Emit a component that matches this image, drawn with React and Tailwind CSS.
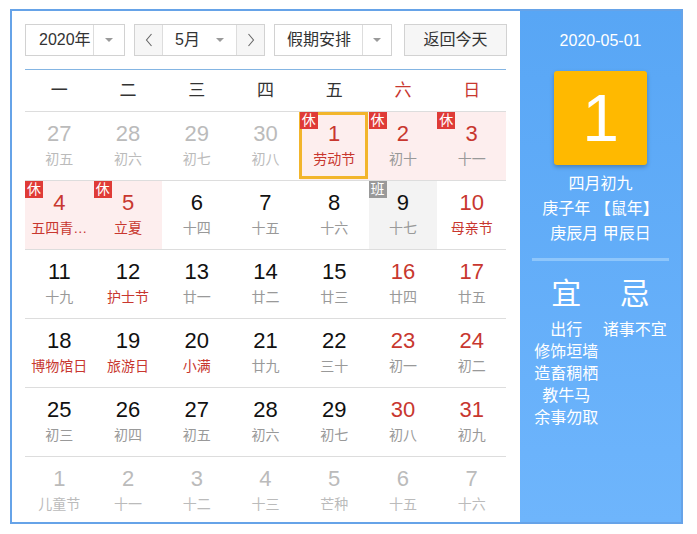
import React from "react";

const RED = "text-[#c8372f]";

const rows = [
  [
    { n: 27, l: "初五", out: true },
    { n: 28, l: "初六", out: true },
    { n: 29, l: "初七", out: true },
    { n: 30, l: "初八", out: true },
    { n: 1, l: "劳动节", hol: true, red: true, fest: true, sel: true },
    { n: 2, l: "初十", hol: true, red: true },
    { n: 3, l: "十一", hol: true, red: true },
  ],
  [
    { n: 4, l: "五四青…", hol: true, red: true, fest: true },
    { n: 5, l: "立夏", hol: true, red: true, fest: true },
    { n: 6, l: "十四" },
    { n: 7, l: "十五" },
    { n: 8, l: "十六" },
    { n: 9, l: "十七", work: true },
    { n: 10, l: "母亲节", red: true, fest: true },
  ],
  [
    { n: 11, l: "十九" },
    { n: 12, l: "护士节", fest: true },
    { n: 13, l: "廿一" },
    { n: 14, l: "廿二" },
    { n: 15, l: "廿三" },
    { n: 16, l: "廿四", red: true },
    { n: 17, l: "廿五", red: true },
  ],
  [
    { n: 18, l: "博物馆日", fest: true },
    { n: 19, l: "旅游日", fest: true },
    { n: 20, l: "小满", fest: true },
    { n: 21, l: "廿九" },
    { n: 22, l: "三十" },
    { n: 23, l: "初一", red: true },
    { n: 24, l: "初二", red: true },
  ],
  [
    { n: 25, l: "初三" },
    { n: 26, l: "初四" },
    { n: 27, l: "初五" },
    { n: 28, l: "初六" },
    { n: 29, l: "初七" },
    { n: 30, l: "初八", red: true },
    { n: 31, l: "初九", red: true },
  ],
  [
    { n: 1, l: "儿童节", out: true },
    { n: 2, l: "十一", out: true },
    { n: 3, l: "十二", out: true },
    { n: 4, l: "十三", out: true },
    { n: 5, l: "芒种", out: true },
    { n: 6, l: "十五", out: true },
    { n: 7, l: "十六", out: true },
  ],
];

function Tri() {
  return (
    <div className="w-0 h-0 border-l-[4px] border-r-[4px] border-t-[4px] border-l-transparent border-r-transparent border-t-[#9a9a9a]" />
  );
}

function Chevron({ dir }) {
  return (
    <svg width="8" height="14" viewBox="0 0 8 14">
      {dir === "left" ? (
        <polyline points="6.5,1 1.5,7 6.5,13" fill="none" stroke="#666" strokeWidth="1.1" />
      ) : (
        <polyline points="1.5,1 6.5,7 1.5,13" fill="none" stroke="#666" strokeWidth="1.1" />
      )}
    </svg>
  );
}

function Cell({ c }) {
  let bg = "";
  if (c.hol) bg = "bg-[#fdeeee]";
  if (c.work) bg = "bg-[#f3f3f3]";
  let numColor = "text-[#111]";
  if (c.red) numColor = RED;
  if (c.out) numColor = "text-[#bbbbbb]";
  let lunColor = "text-[#999]";
  if (c.fest) lunColor = RED;
  if (c.out) lunColor = "text-[#bbbbbb]";
  return (
    <div className={`relative h-full flex flex-col items-center pt-[9px] ${bg}`}>
      {c.sel && (
        <div className="absolute left-[-1px] right-[1px] top-0 bottom-[1px] border-[3px] border-[#f2b52c]" />
      )}
      {c.hol && (
        <div className="absolute left-0 top-0 z-10 w-[18px] h-[17px] bg-[#df3b37] text-white text-[14px] leading-[17px] text-center">
          休
        </div>
      )}
      {c.work && (
        <div className="absolute left-0 top-0 z-10 w-[18px] h-[17px] bg-[#999] text-white text-[14px] leading-[17px] text-center">
          班
        </div>
      )}
      <div className={`text-[22px] leading-[26px] ${numColor}`}>{c.n}</div>
      <div className={`mt-[2px] text-[14px] leading-[20px] whitespace-nowrap ${lunColor}`}>{c.l}</div>
    </div>
  );
}

export default function App() {
  const week = ["一", "二", "三", "四", "五", "六", "日"];
  return (
    <div className="w-[697px] h-[534px] bg-white pt-[9px] pl-[10px] font-['Liberation_Sans','Noto_Sans_CJK_SC',sans-serif]">
      <div className="w-[673px] h-[515px] border-2 border-[#66a3e8] flex overflow-hidden">
        {/* Left */}
        <div className="w-[508px] h-full pl-[13px] pt-[13px] overflow-hidden bg-white">
          <div className="flex items-center h-[32px] text-[16px] text-[#333]">
            <div className="w-[100px] h-[32px] border border-[#d2d2d2] flex">
              <div className="flex-1 pl-[13px] flex items-center">2020年</div>
              <div className="w-[31px] border-l border-[#dddddd] flex items-center justify-center">
                <Tri />
              </div>
            </div>
            <div className="ml-[9px] w-[131px] h-[32px] border border-[#d2d2d2] flex">
              <div className="w-[28px] bg-[#f6f6f6] border-r border-[#dddddd] flex items-center justify-center">
                <Chevron dir="left" />
              </div>
              <div className="flex-1 flex items-center justify-between pl-[12px] pr-[12px]">
                <span>5月</span>
                <Tri />
              </div>
              <div className="w-[28px] bg-[#f6f6f6] border-l border-[#dddddd] flex items-center justify-center">
                <Chevron dir="right" />
              </div>
            </div>
            <div className="ml-[9px] w-[118px] h-[32px] border border-[#d2d2d2] flex">
              <div className="flex-1 pl-[12px] flex items-center">假期安排</div>
              <div className="w-[29px] border-l border-[#dddddd] flex items-center justify-center">
                <Tri />
              </div>
            </div>
            <div className="ml-[12px] w-[103px] h-[32px] border border-[#d2d2d2] bg-[#f6f6f6] flex items-center justify-center">
              返回今天
            </div>
          </div>
          <div className="mt-[13px] h-px w-[481px] bg-[#84b5e3]" />
          <div className="w-[481px] h-[42px] border-b border-[#dddddd] grid grid-cols-7 items-center text-[17px]">
            {week.map((w, i) => (
              <div key={w} className={`text-center ${i >= 5 ? RED : "text-[#333]"}`}>
                {w}
              </div>
            ))}
          </div>
          {rows.map((r, ri) => (
            <div key={ri} className="w-[481px] h-[69px] border-b border-[#dddddd] grid grid-cols-7">
              {r.map((c, ci) => (
                <Cell key={ci} c={c} />
              ))}
            </div>
          ))}
        </div>
        {/* Right */}
        <div className="flex-1 h-full bg-linear-to-b from-[#58a6f5] to-[#6eb5fc] flex flex-col items-center text-white">
          <div className="pt-[20px] text-[16px] leading-[20px]">2020-05-01</div>
          <div className="mt-[20px] w-[93px] h-[94px] bg-[#ffb900] rounded-[3px] shadow-[0_2px_4px_rgba(0,0,0,0.25)] flex items-center justify-center text-[66px] leading-none">
            1
          </div>
          <div className="mt-[6px] text-[16px] leading-[25px] text-center">
            <div>四月初九</div>
            <div>庚子年 【鼠年】</div>
            <div>庚辰月 甲辰日</div>
          </div>
          <div className="mt-[12px] h-[3px] w-[137px] bg-[#8ec6fb]" />
          <div className="mt-[15px] w-[137px] grid grid-cols-2 text-[30px] leading-[36px] text-center">
            <div>宜</div>
            <div>忌</div>
          </div>
          <div className="mt-[7px] w-[137px] grid grid-cols-2 text-[16px] leading-[22px] text-center">
            <div className="flex flex-col items-center">
              <div>出行</div>
              <div>修饰垣墙</div>
              <div>造畜稠栖</div>
              <div>教牛马</div>
              <div>余事勿取</div>
            </div>
            <div className="flex flex-col items-center">
              <div>诸事不宜</div>
            </div>
          </div>
        </div>
      </div>
    </div>
  );
}
